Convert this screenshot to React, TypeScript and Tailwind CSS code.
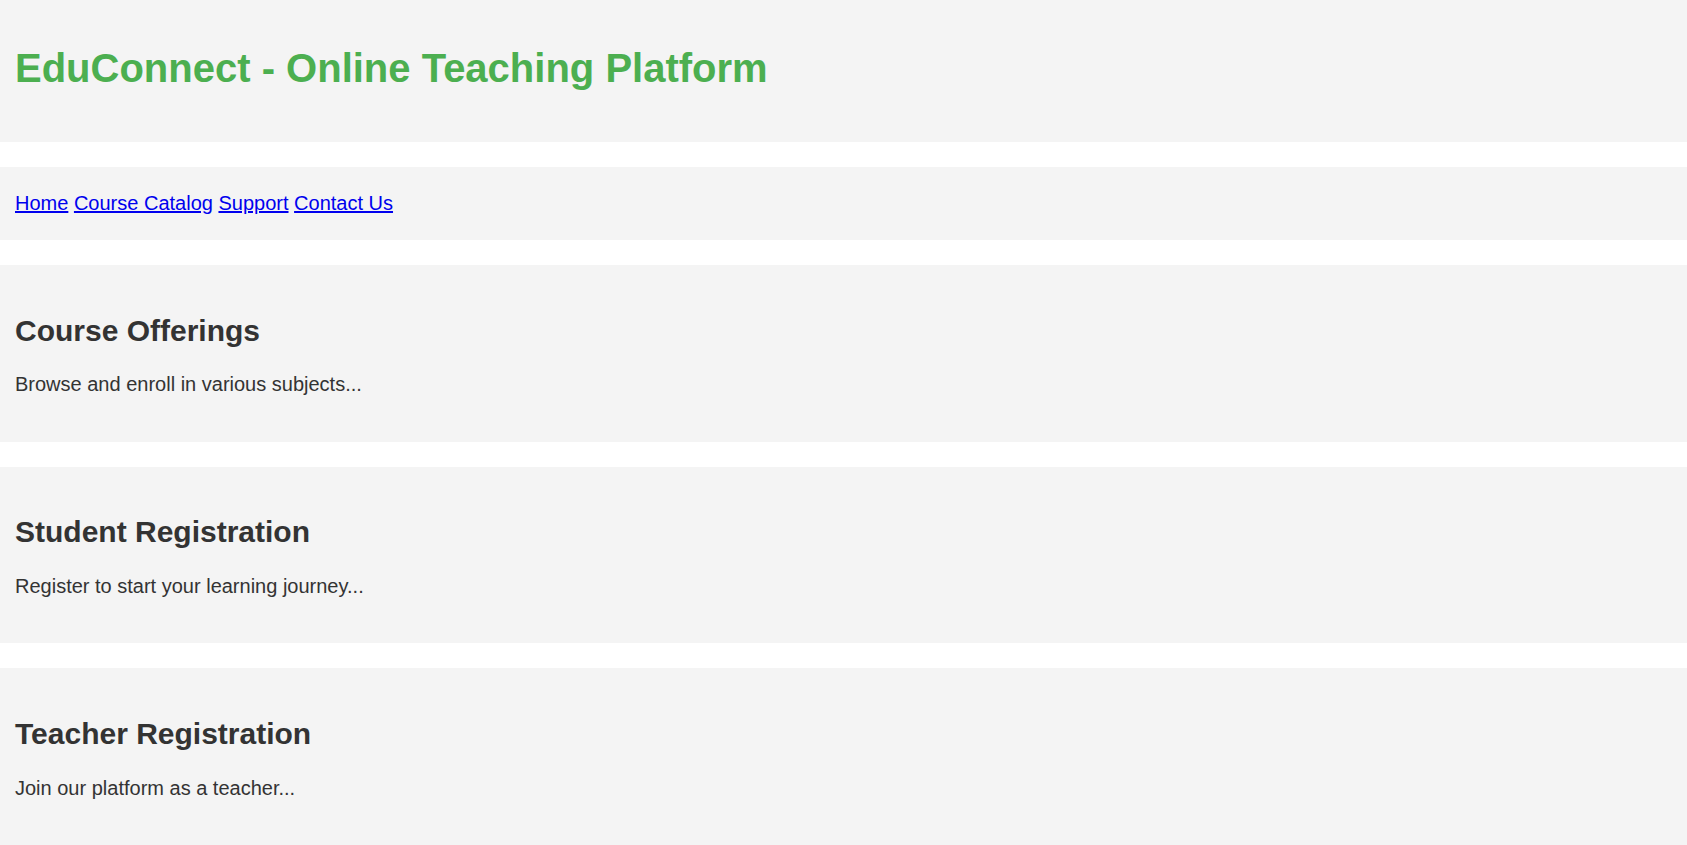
import React from "react";

const sections = [
  { title: "Course Offerings", text: "Browse and enroll in various subjects..." },
  { title: "Student Registration", text: "Register to start your learning journey..." },
  { title: "Teacher Registration", text: "Join our platform as a teacher..." },
];

export default function App() {
  return (
    <div className="min-h-screen bg-white font-['Liberation_Sans',Arial,sans-serif] text-[#333333]">
      <header className="bg-[#f4f4f4] px-[15px] pt-[45px] pb-[51px]">
        <h1 className="text-[40px] font-bold leading-[46px] text-[#4caf50]">
          EduConnect - Online Teaching Platform
        </h1>
      </header>
      <nav className="mt-[25px] bg-[#f4f4f4] px-[15px] py-[25px] text-[20px] leading-[23px]">
        <a href="#" className="text-[#0000ee] underline">Home</a>{" "}
        <a href="#" className="text-[#0000ee] underline">Course Catalog</a>{" "}
        <a href="#" className="text-[#0000ee] underline">Support</a>{" "}
        <a href="#" className="text-[#0000ee] underline">Contact Us</a>
      </nav>
      {sections.map((s) => (
        <section key={s.title} className="mt-[25px] bg-[#f4f4f4] px-[15px] pt-[48.8px] pb-[45.4px]">
          <h2 className="text-[30px] font-bold leading-[34.5px]">{s.title}</h2>
          <p className="mt-[25px] text-[20px] leading-[23px]">{s.text}</p>
        </section>
      ))}
    </div>
  );
}
